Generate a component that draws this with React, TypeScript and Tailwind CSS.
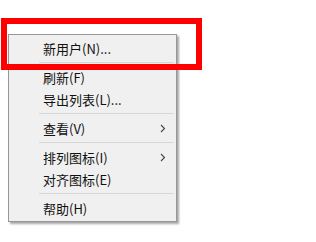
import React from "react";

type Entry = { label: string; sub?: boolean } | "sep";

const entries: Entry[] = [
  { label: "新用户(N)..." },
  "sep",
  { label: "刷新(F)" },
  { label: "导出列表(L)..." },
  "sep",
  { label: "查看(V)", sub: true },
  "sep",
  { label: "排列图标(I)", sub: true },
  { label: "对齐图标(E)" },
  "sep",
  { label: "帮助(H)" },
];

export default function App() {
  return (
    <div
      className="relative w-[316px] h-[242px] bg-white overflow-hidden"
      style={{ fontFamily: '"Noto Sans CJK SC", "Noto Sans", sans-serif' }}
    >
      {/* context menu */}
      <div className="ml-[8px] pt-[34px]">
        <div className="w-[169px] bg-[#f0f0f0] border border-[#979797] py-[2px] shadow-[2px_2px_2px_rgba(0,0,0,0.35)]">
          {entries.map((e, i) =>
            e === "sep" ? (
              <div key={i} className="h-[7px] flex items-center pl-[30px] pr-[2px]">
                <div className="h-px w-full bg-[#d7d7d7]" />
              </div>
            ) : (
              <div
                key={i}
                className="h-[22px] flex items-center justify-between pl-[34px] pr-[10px] text-[13px] text-[#111] leading-none"
              >
                <span>{e.label}</span>
                {e.sub && (
                  <svg width="6" height="9" viewBox="0 0 6 9" className="text-[#444]">
                    <path d="M1 1 L4.5 4.5 L1 8" fill="none" stroke="currentColor" strokeWidth="1.1" />
                  </svg>
                )}
              </div>
            )
          )}
        </div>
      </div>

      {/* red highlight box */}
      <div className="absolute left-[1px] top-[18px] w-[201px] h-[52px] border-[6px] border-[#ff0000]" />
    </div>
  );
}
